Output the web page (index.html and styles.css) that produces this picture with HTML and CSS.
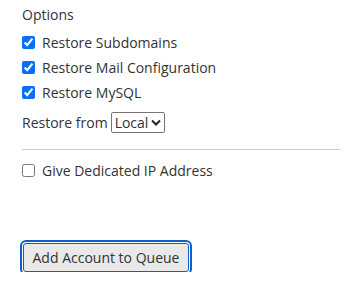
FILE: index.html
```html
<!DOCTYPE html>
<html>
<head>
<meta charset="utf-8">
<link rel="stylesheet" href="styles.css">
</head>
<body>
<div class="panel">
  <div class="heading">Options</div>
  <label class="opt"><input type="checkbox" checked> Restore Subdomains</label>
  <label class="opt"><input type="checkbox" checked> Restore Mail Configuration</label>
  <label class="opt"><input type="checkbox" checked> Restore MySQL</label>
  <div class="from">Restore from <select class="sel"><option>Local</option></select></div>
  <hr class="sep">
  <label class="opt"><input type="checkbox"> Give Dedicated IP Address</label>
  <div class="actions"><button class="btn">Add Account to Queue</button></div>
</div>
</body>
</html>
```
FILE: styles.css
```css
html, body { margin: 0; padding: 0; background: #fff; }
body { font-family: "Open Sans", sans-serif; font-size: 14px; color: #333; }
.panel { padding: 5px 8px 0 22px; display: flex; flex-direction: column; }
.heading { line-height: 20px; margin-bottom: 5px; }
.opt { display: flex; align-items: center; gap: 7px; height: 25px; }
.opt input { margin: 0; width: 13px; height: 13px; accent-color: #0b6ef7; }
.from { display: flex; align-items: center; gap: 3px; margin-top: 7px; height: 21px; }
.sel {
  -webkit-appearance: none; appearance: none;
  font-family: "Open Sans", sans-serif; font-size: 14px; color: #333;
  width: 54px; height: 21px; line-height: 19px;
  border: 1px solid #767676; border-radius: 2px;
  padding: 0 14px 0 3px; margin: 0;
  background-color: #fff;
  background-image: url("data:image/svg+xml;utf8,<svg xmlns='http://www.w3.org/2000/svg' width='10' height='7' viewBox='0 0 10 7'><path d='M1 1.5 L5 5.5 L9 1.5' fill='none' stroke='%23222' stroke-width='2'/></svg>");
  background-repeat: no-repeat;
  background-position: right 3px center;
}
.sep { border: 0; border-top: 1px solid #ccc; margin: 16px 0 8px 0; }
.actions { margin-top: 60px; }
.btn { font-family: "Open Sans", sans-serif; font-size: 14px; color: #333; background: #e9e9e9; border: 1px solid #0a5fc8; border-radius: 3px; padding: 0; white-space: nowrap; outline: 2px solid #0a5fc8; outline-offset: 1px; width: 166px; height: 29px; margin-left: 1px; }
```
